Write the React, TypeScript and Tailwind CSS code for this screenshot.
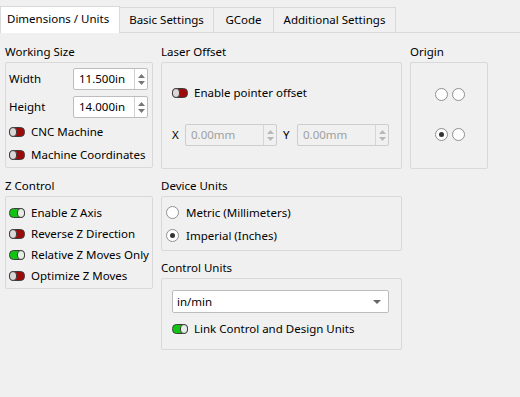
import React from 'react';

const Toggle = ({ on }: { on: boolean }) => (
  <svg width="16" height="10" viewBox="0 0 16 10" className="shrink-0">
    <rect x="0.5" y="0.5" width="15" height="9" rx="4" fill={on ? '#11c411' : '#9c0a0a'} stroke="#3c3c3c" />
    {on ? (
      <rect x="8.5" y="0.5" width="7" height="9" rx="3.5" fill="#e6ece6" stroke="#3c3c3c" />
    ) : (
      <rect x="0.5" y="0.5" width="7" height="9" rx="3.5" fill="#dcd6d6" stroke="#3c3c3c" />
    )}
  </svg>
);

const Radio = ({ checked }: { checked?: boolean }) => (
  <span className="w-[13px] h-[13px] rounded-full border border-[#8f8f8f] bg-white flex items-center justify-center shrink-0">
    {checked && <span className="w-[5px] h-[5px] rounded-full bg-[#333]" />}
  </span>
);

const SpinArrows = ({ disabled }: { disabled?: boolean }) => (
  <div className={`w-[13px] h-full flex flex-col items-center justify-center gap-[3px] border-l ${disabled ? 'border-[#d6d6d6]' : 'border-[#d0d0d0]'}`}>
    <svg width="7" height="4" viewBox="0 0 7 4">
      <path d="M0 4 L3.5 0 L7 4 Z" fill={disabled ? '#b8b8b8' : '#777'} />
    </svg>
    <svg width="7" height="4" viewBox="0 0 7 4">
      <path d="M0 0 L3.5 4 L7 0 Z" fill={disabled ? '#b8b8b8' : '#777'} />
    </svg>
  </div>
);

const SpinBox = ({ value, width, disabled }: { value: string; width: string; disabled?: boolean }) => (
  <div
    className={`${width} h-[22px] flex items-stretch rounded-[2px] border ${
      disabled ? 'border-[#cdcdcd] bg-[#f0f0f0] text-[#a0a0a0]' : 'border-[#bdbdbd] bg-white text-black'
    }`}
  >
    <div className="flex-1 flex items-center pl-[5px]">{value}</div>
    <SpinArrows disabled={disabled} />
  </div>
);

const Label = ({ children }: { children: React.ReactNode }) => (
  <div className="h-[21px] flex items-center">{children}</div>
);

const Box = ({ className, children }: { className: string; children?: React.ReactNode }) => (
  <div className={`border border-[#d9d9d9] rounded-[2px] ${className}`}>{children}</div>
);

const ToggleRow = ({ on, text, h = 'h-[21px]' }: { on: boolean; text: string; h?: string }) => (
  <div className={`${h} flex items-center gap-[6px]`}>
    <Toggle on={on} />
    <span>{text}</span>
  </div>
);

export default function App() {
  const tabs = [
    { name: 'Basic Settings', w: 'w-[95px]' },
    { name: 'GCode', w: 'w-[61px]' },
    { name: 'Additional Settings', w: 'w-[123px]' },
  ];

  return (
    <div className="w-[520px] h-[397px] bg-[#f0f0f0] text-[11.5px] text-black whitespace-nowrap font-['Noto_Sans',sans-serif] overflow-hidden">
      {/* tabs */}
      <div className="h-[32px] flex items-end">
        <div className="w-[120px] h-[27px] bg-white border border-b-0 border-[#d9d9d9] flex items-center pl-[6px] relative z-10 -mb-px pb-[2px]">
          Dimensions / Units
        </div>
        {tabs.map((t) => (
          <div
            key={t.name}
            className={`${t.w} h-[25px] -ml-px bg-[#f0f0f0] border border-b-0 border-[#d9d9d9] flex items-center justify-center`}
          >
            {t.name}
          </div>
        ))}
      </div>

      <div className="border-t border-[#d9d9d9] flex gap-[8px] pl-[5px] pt-[8px]">
        {/* left column */}
        <div className="w-[148px] flex flex-col">
          <Label>Working Size</Label>
          <Box className="h-[106px] pl-[3px] pr-[4px] pt-[5px]">
            <div className="flex items-center h-[22px]">
              <span className="w-[64px]">Width</span>
              <SpinBox value="11.500in" width="w-[75px]" />
            </div>
            <div className="flex items-center h-[22px] mt-[6px]">
              <span className="w-[64px]">Height</span>
              <SpinBox value="14.000in" width="w-[75px]" />
            </div>
            <div className="mt-[2px]">
              <ToggleRow on={false} text="CNC Machine" h="h-[23px]" />
              <ToggleRow on={false} text="Machine Coordinates" h="h-[23px]" />
            </div>
          </Box>

          <div className="mt-[7px]">
            <Label>Z Control</Label>
          </div>
          <Box className="h-[93px] pl-[3px] pt-[5px]">
            <ToggleRow on text="Enable Z Axis" />
            <ToggleRow on={false} text="Reverse Z Direction" />
            <ToggleRow on text="Relative Z Moves Only" />
            <ToggleRow on={false} text="Optimize Z Moves" />
          </Box>
        </div>

        {/* middle column */}
        <div className="w-[241px] flex flex-col">
          <Label>Laser Offset</Label>
          <Box className="h-[107px] pl-[10px] pt-[19px]">
            <ToggleRow on={false} text="Enable pointer offset" />
            <div className="flex items-center h-[22px] mt-[21px]">
              <span className="w-[13px]">X</span>
              <SpinBox value="0.00mm" width="w-[92px]" disabled />
              <span className="w-[14px] ml-[6px]">Y</span>
              <SpinBox value="0.00mm" width="w-[92px]" disabled />
            </div>
          </Box>

          <div className="mt-[6px]">
            <Label>Device Units</Label>
          </div>
          <Box className="h-[55px] pl-[4px] pt-[4px]">
            <div className="h-[23px] flex items-center gap-[7px]">
              <Radio />
              <span>Metric (Millimeters)</span>
            </div>
            <div className="h-[23px] flex items-center gap-[7px]">
              <Radio checked />
              <span>Imperial (Inches)</span>
            </div>
          </Box>

          <div className="mt-[6px]">
            <Label>Control Units</Label>
          </div>
          <Box className="h-[72px] pl-[10px] pt-[11px]">
            <div className="w-[217px] h-[23px] bg-white border border-[#bdbdbd] rounded-[2px] flex items-center justify-between pl-[4px] pr-[7px]">
              <span>in/min</span>
              <svg width="8" height="4" viewBox="0 0 8 4">
                <path d="M0 0 L4 4 L8 0 Z" fill="#666" />
              </svg>
            </div>
            <div className="mt-[5px]">
              <ToggleRow on text="Link Control and Design Units" />
            </div>
          </Box>
        </div>

        {/* right column */}
        <div className="w-[78px] flex flex-col">
          <Label>Origin</Label>
          <Box className="h-[107px] pt-[25px] flex flex-col items-center gap-[27px]">
            <div className="flex gap-[4px] pl-[1px]">
              <Radio />
              <Radio />
            </div>
            <div className="flex gap-[4px] pl-[1px]">
              <Radio checked />
              <Radio />
            </div>
          </Box>
        </div>
      </div>
    </div>
  );
}
